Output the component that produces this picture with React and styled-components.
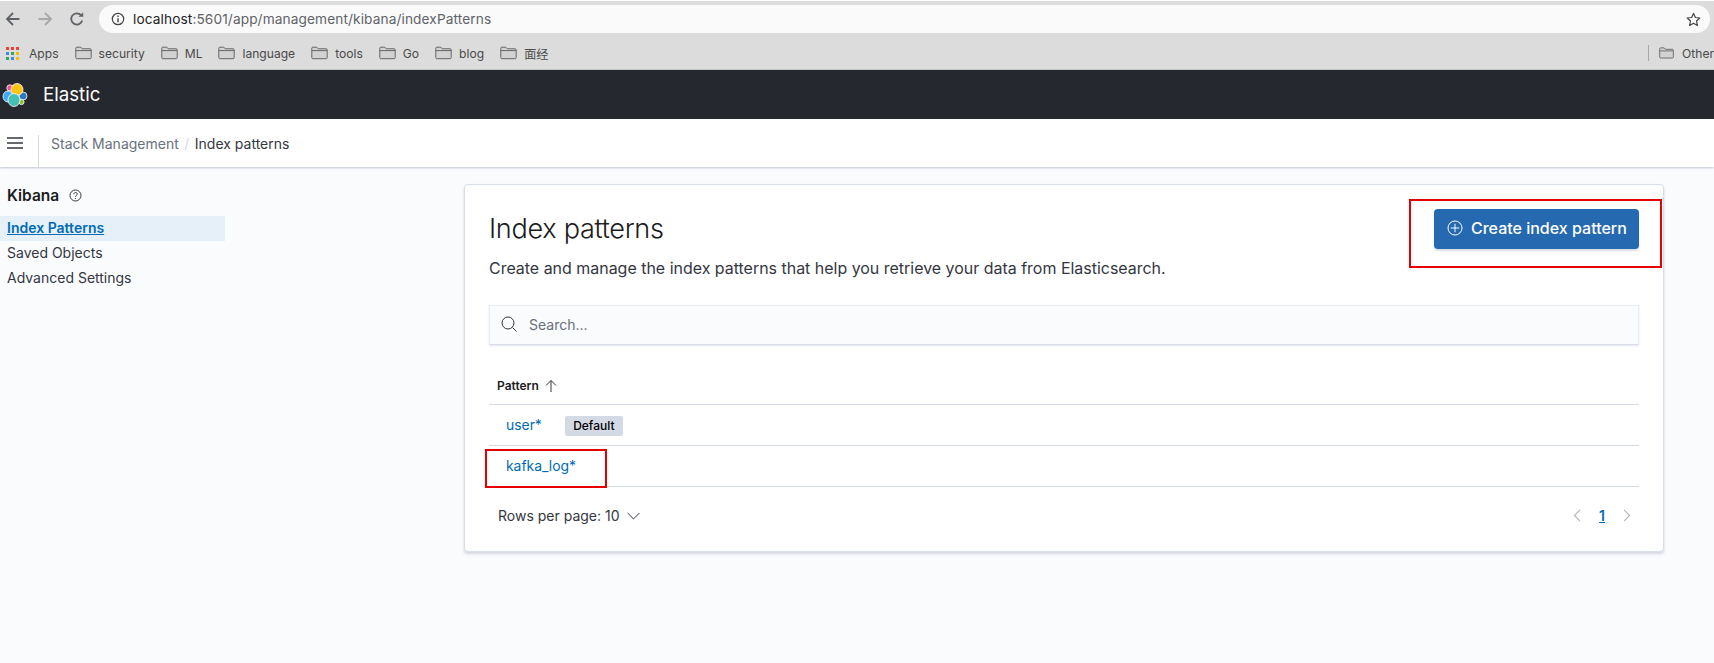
import React from "react";
import styled, { createGlobalStyle } from "styled-components";

const Global = createGlobalStyle`
  html, body { margin: 0; padding: 0; background: #fafbfd; }
  body { font-family: Inter, "Noto Sans CJK SC", sans-serif; color: #343741; overflow: hidden; }
  * { box-sizing: border-box; }
`;

const Page = styled.div`width: 1714px; height: 663px; display: flex; flex-direction: column; background: #fafbfd;`;

const Toolbar = styled.div`
  height: 37px; background: linear-gradient(#fff 0 1px, #dcdcdc 1px); display: flex; align-items: flex-start;
  padding: 5px 4px 0 5px;
`;
const NavIcons = styled.div`display: flex; align-items: center; height: 28px; gap: 16px; width: 94px; flex: none;`;
const Address = styled.div`
  flex: 1; height: 28px; border-radius: 14px; background: #fafafa; display: flex; align-items: center;
  padding: 0 9px 0 12px; font-size: 13.7px; color: #5f6368; letter-spacing: 0.1px;
`;
const Host = styled.span`color: #202124;`;
const UrlText = styled.span`margin-left: 8px; flex: 1;`;

const Bookmarks = styled.div`
  height: 33px; background: #dcdcdc; border-bottom: 1px solid #c4c4c4; display: flex; align-items: center;
  padding-left: 6px; font-size: 12.1px; color: #4a4a4a;
`;
const Bookmark = styled.div`display: flex; align-items: center; gap: ${p => p.$inner}px; margin-right: 16px; white-space: nowrap;`;
const BookmarkEnd = styled.div`
  margin-left: auto; display: flex; align-items: center; gap: 8px; height: 16px; width: 66px; padding-left: 10px;
  border-left: 1px solid #a8a8a8; overflow: hidden; white-space: nowrap;
`;

const Header = styled.div`height: 49px; background: #25282f; display: flex; align-items: center; padding-left: 2px; flex: none;`;
const Brand = styled.div`margin-left: 15px; font-size: 18.7px; color: #fff; font-weight: 400;`;

const Crumbs = styled.div`
  height: 48px; background: #fff; display: flex; flex: none; position: relative; z-index: 1;
  box-shadow: 0 1px 2px rgba(120,130,160,.45);
`;
const Burger = styled.div`width: 38px; height: 48px; display: flex; align-items: center; padding-left: 7px;`;
const CrumbDivider = styled.div`width: 1px; height: 32px; margin-top: 16px; background: #d3dae6;`;
const Crumb = styled.div`
  display: flex; align-items: center; height: 48px; padding-left: 12px; font-size: 14px; color: #69707d;
`;
const Slash = styled.span`color: #d3dae6; margin: 0 5.5px;`;
const CrumbNow = styled.span`color: #343741;`;

const Main = styled.div`flex: 1; display: flex; align-items: flex-start;`;
const Sidebar = styled.aside`width: 225px; flex: none; margin-right: 239px; padding-top: 19px;`;
const SideTitle = styled.div`
  display: flex; align-items: center; gap: 10px; padding-left: 7px; height: 18px; margin-bottom: 12px;
  font-size: 15.5px; font-weight: 600; color: #1a1c21;
`;
const SideItem = styled.div`
  height: 25px; line-height: 24px; padding-left: 7px; font-size: 14px; color: ${p => (p.$active ? "#006bb4" : "#343741")};
  background: ${p => (p.$active ? "#e6f0f8" : "transparent")}; font-weight: ${p => (p.$active ? 600 : 400)};
  text-decoration: ${p => (p.$active ? "underline" : "none")};
`;

const Panel = styled.section`
  width: 1200px; height: 368px; margin-top: 17px; background: #fff; border: 1px solid #d9dfea; border-radius: 4px;
  padding: 24px 24px 0 24px; box-shadow: 0 2px 3px rgba(120,130,160,.3);
`;
const PanelHead = styled.div`display: flex; justify-content: space-between; align-items: flex-start; height: 96px;`;
const Title = styled.h1`margin: 2px 0 0; font-size: 27.1px; line-height: 36px; font-weight: 300; color: #1a1c21; letter-spacing: -0.3px;`;
const Sub = styled.p`margin: 10px 0 0; font-size: 15.96px; line-height: 24px; color: #343741; white-space: nowrap;`;
const ButtonBox = styled.div`position: relative;`;
const Button = styled.div`
  width: 205px; height: 40px; background: #2569b0; border-radius: 4px; color: #fff; font-size: 16px; font-weight: 500;
  display: flex; align-items: center; gap: 8px; padding: 0 0 2px 13px; box-shadow: 0 2px 2px rgba(100,120,160,.25);
`;
const RedBox = styled.div`position: absolute; border: 2px solid #e60000; pointer-events: none;`;
const ButtonMark = styled(RedBox)`left: -25px; top: -10px; width: 253px; height: 69px;`;
const RowMark = styled(RedBox)`left: -4px; top: 3px; width: 122px; height: 39px;`;

const Search = styled.div`
  height: 40px; background: #fafbfd; border: 1px solid #e8ecf3; border-bottom-color: #d9dfea; display: flex; align-items: center;
  gap: 12px; padding: 0 0 2px 11px; font-size: 14px; color: #69707d; box-shadow: 0 1px 2px rgba(120,130,160,.2);
`;
const TableHead = styled.div`
  height: 60px; border-bottom: 1px solid #d3dae6; display: flex; align-items: flex-end; padding: 0 0 8px 8px; gap: 6px;
  font-size: 12px; font-weight: 600; color: #1a1c21; line-height: 20px;
  svg { margin-bottom: 3px; }
`;
const Row = styled.div`
  height: 41px; border-bottom: 1px solid #d3dae6; position: relative; display: flex; align-items: center; padding: 0 0 0 17px;
  font-size: 13.9px; color: #006bb4;
`;
const Badge = styled.span`
  margin: 1px 0 0 23px; height: 20px; width: 58px; background: #d3dae6; border-radius: 2px; color: #000; font-size: 12px; font-weight: 500;
  display: inline-flex; align-items: center; justify-content: center;
`;
const Footer = styled.div`
  height: 57px; display: flex; align-items: center; justify-content: space-between; padding: 0 8px 0 9px; font-size: 14px; color: #343741;
`;
const Rows = styled.div`display: flex; align-items: center; gap: 7px;`;
const Pager = styled.div`display: flex; align-items: center; gap: 18px;`;
const PageNum = styled.span`color: #006bb4; font-weight: 600; font-size: 14px; text-decoration: underline;`;

const Back = ({ color }) => (
  <svg width="16" height="16" viewBox="0 0 16 16" fill="none" stroke={color} strokeWidth="1.8"><path d="M14.5 8H2M8 2 2 8l6 6" /></svg>
);
const Forward = ({ color }) => (
  <svg width="16" height="16" viewBox="0 0 16 16" fill="none" stroke={color} strokeWidth="1.8"><path d="M1.5 8H14M8 2l6 6-6 6" /></svg>
);
const Reload = () => (
  <svg width="16" height="16" viewBox="0 0 16 16" fill="none" stroke="#5f6368" strokeWidth="1.8">
    <path d="M13.2 9.5A5.6 5.6 0 1 1 12 4.2" /><path d="M14.2 1.2v4.6H9.6z" fill="#5f6368" stroke="none" />
  </svg>
);
const Info = () => (
  <svg width="14" height="14" viewBox="0 0 14 14" fill="none" stroke="#444" strokeWidth="1.2">
    <circle cx="7" cy="7" r="5.7" /><path d="M7 6.2v4" strokeWidth="1.4" /><path d="M7 3.6v1.3" strokeWidth="1.4" />
  </svg>
);
const Star = () => (
  <svg width="15" height="15" viewBox="0 0 15 15" fill="none" stroke="#444" strokeWidth="1.2" strokeLinejoin="round">
    <path d="M7.5 1.4 9.4 5.5l4.4.5-3.3 3 .9 4.4-3.9-2.2-3.9 2.2.9-4.4-3.3-3 4.4-.5z" />
  </svg>
);
const Folder = () => (
  <svg width="17" height="14" viewBox="0 0 17 14" fill="#d2d2d2" stroke="#666" strokeWidth="1">
    <path d="M.8 2.2c0-.6.4-1 1-1h4l1.4 1.6h8c.6 0 1 .4 1 1v7.9c0 .6-.4 1-1 1H1.8c-.6 0-1-.4-1-1z" /><path d="M.8 4.6h15.4" />
  </svg>
);
const Apps = () => (
  <svg width="13" height="13" viewBox="0 0 13 13">
    {[["#ea4335", "#ea4335", "#ea4335"], ["#4285f4", "#34a853", "#fbbc05"], ["#34a853", "#4285f4", "#fbbc05"]].map((r, y) =>
      r.map((c, x) => <rect key={`${x}${y}`} x={x * 5} y={y * 5} width="3" height="3" fill={c} />)
    )}
  </svg>
);
const Logo = () => (
  <svg width="26" height="26" viewBox="0 0 26 26">
    <circle cx="8" cy="6" r="3.2" fill="#ee4f9b" stroke="#fff" strokeWidth=".8" />
    <ellipse cx="6" cy="14.5" rx="5" ry="5.5" fill="#3fa9f5" stroke="#fff" strokeWidth=".8" />
    <circle cx="21" cy="14" r="4" fill="#2b78c6" stroke="#fff" strokeWidth=".8" />
    <circle cx="19.5" cy="20" r="2.6" fill="#8fbe2b" stroke="#fff" strokeWidth=".8" />
    <circle cx="15" cy="7.5" r="6" fill="#fec514" stroke="#fff" strokeWidth=".8" />
    <ellipse cx="12" cy="18" rx="6" ry="6.5" fill="#46bfb4" stroke="#fff" strokeWidth=".8" />
  </svg>
);
const Menu = () => (
  <svg width="16" height="12" viewBox="0 0 16 12" stroke="#343741" strokeWidth="1.5"><path d="M0 1h16M0 6h16M0 11h16" /></svg>
);
const Help = () => (
  <svg width="13" height="13" viewBox="0 0 13 13" fill="none" stroke="#343741" strokeWidth="1">
    <circle cx="6.5" cy="6.5" r="5.5" /><path d="M4.8 5.2c0-2.2 3.5-2.2 3.5-.1 0 1.3-1.8 1.3-1.8 2.7M6.5 9v.9" />
  </svg>
);
const Plus = () => (
  <svg width="16" height="16" viewBox="0 0 16 16" fill="none" stroke="#fff" strokeWidth="1">
    <circle cx="8" cy="8" r="7" /><path d="M8 3.8v8.4M3.8 8h8.4" />
  </svg>
);
const SearchIcon = () => (
  <svg width="16" height="16" viewBox="0 0 16 16" fill="none" stroke="#343741" strokeWidth="1">
    <circle cx="7" cy="7" r="6" /><path d="m11.5 11.5 4 4" />
  </svg>
);
const ArrowUp = () => (
  <svg width="12" height="14" viewBox="0 0 12 14" fill="none" stroke="#343741" strokeWidth="1"><path d="M6 13V1.5M1 6.5l5-5 5 5" /></svg>
);
const Chevron = () => (
  <svg width="13" height="8" viewBox="0 0 13 8" fill="none" stroke="#343741" strokeWidth="1"><path d="m.6 1 5.9 5.9L12.4 1" /></svg>
);
const PageArrow = ({ d }) => (
  <svg width="8" height="13" viewBox="0 0 8 13" fill="none" stroke="#b4b7bd" strokeWidth="1.2"><path d={d} /></svg>
);

const bookmarks = ["security", "ML", "language", "tools", "Go", "blog", "面经"];

export default function App() {
  return (
    <Page>
      <Global />
      <Toolbar>
        <NavIcons>
          <Back color="#5f6368" />
          <Forward color="#a8a8a8" />
          <Reload />
        </NavIcons>
        <Address>
          <Info />
          <UrlText><Host>localhost</Host>:5601/app/management/kibana/indexPatterns</UrlText>
          <Star />
        </Address>
      </Toolbar>
      <Bookmarks>
        <Bookmark $inner={10}><Apps />Apps</Bookmark>
        {bookmarks.map(name => (
          <Bookmark key={name} $inner={7}><Folder />{name}</Bookmark>
        ))}
        <BookmarkEnd><Folder />Other</BookmarkEnd>
      </Bookmarks>
      <Header>
        <Logo />
        <Brand>Elastic</Brand>
      </Header>
      <Crumbs>
        <Burger><Menu /></Burger>
        <CrumbDivider />
        <Crumb>Stack Management<Slash>/</Slash><CrumbNow>Index patterns</CrumbNow></Crumb>
      </Crumbs>
      <Main>
        <Sidebar>
          <SideTitle>Kibana <Help /></SideTitle>
          <SideItem $active>Index Patterns</SideItem>
          <SideItem>Saved Objects</SideItem>
          <SideItem>Advanced Settings</SideItem>
        </Sidebar>
        <Panel>
          <PanelHead>
            <div>
              <Title>Index patterns</Title>
              <Sub>Create and manage the index patterns that help you retrieve your data from Elasticsearch.</Sub>
            </div>
            <ButtonBox>
              <Button><Plus />Create index pattern</Button>
              <ButtonMark />
            </ButtonBox>
          </PanelHead>
          <Search><SearchIcon />Search...</Search>
          <TableHead>Pattern <ArrowUp /></TableHead>
          <Row>user*<Badge>Default</Badge></Row>
          <Row>kafka_log*<RowMark /></Row>
          <Footer>
            <Rows>Rows per page: 10 <Chevron /></Rows>
            <Pager>
              <PageArrow d="M7 .8 1.4 6.5 7 12.2" />
              <PageNum>1</PageNum>
              <PageArrow d="M1 .8l5.6 5.7L1 12.2" />
            </Pager>
          </Footer>
        </Panel>
      </Main>
    </Page>
  );
}
